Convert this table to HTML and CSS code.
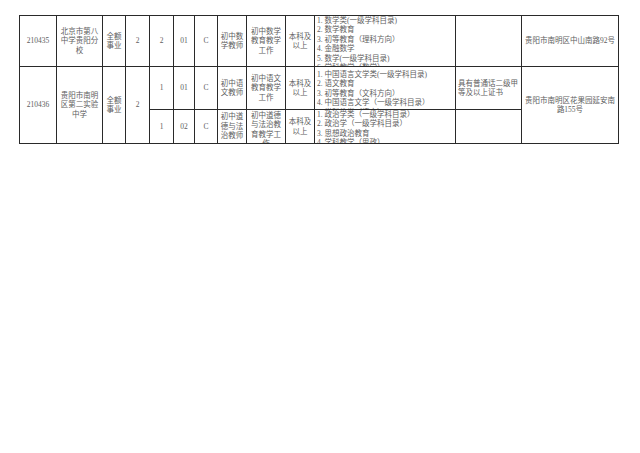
FILE: index.html
```html
<!DOCTYPE html>
<html lang="zh">
<head>
<meta charset="utf-8">
<link rel="stylesheet" href="styles.css">
</head>
<body>
<div class="sheet">
  <div class="c">210435</div>
  <div class="c">北京市第八中学贵阳分校</div>
  <div class="c">全额事业</div>
  <div class="c">2</div>
  <div class="c">2</div>
  <div class="c">01</div>
  <div class="c">C</div>
  <div class="c">初中数学教师</div>
  <div class="c">初中数学教育教学工作</div>
  <div class="c">本科及以上</div>
  <div class="m">1. 数学类(一级学科目录)<br>2. 数学教育<br>3. 初等教育（理科方向）<br>4. 金融数学<br>5. 数学(一级学科目录)<br>6. 学科教学（数学）</div>
  <div class="c"></div>
  <div class="c">贵阳市南明区中山南路92号</div>

  <div class="c span2">210436</div>
  <div class="c span2">贵阳市南明区第二实验中学</div>
  <div class="c span2">全额事业</div>
  <div class="c span2">2</div>
  <div class="c">1</div>
  <div class="c">01</div>
  <div class="c">C</div>
  <div class="c">初中语文教师</div>
  <div class="c">初中语文教育教学工作</div>
  <div class="c">本科及以上</div>
  <div class="m m2">1. 中国语言文学类(一级学科目录)<br>2. 语文教育<br>3. 初等教育（文科方向）<br>4. 中国语言文学（一级学科目录）<br>5. 学科教学（语文）</div>
  <div class="c l">具有普通话二级甲等及以上证书</div>
  <div class="c span2">贵阳市南明区花果园延安南路155号</div>

  <div class="c">1</div>
  <div class="c">02</div>
  <div class="c">C</div>
  <div class="c">初中道德与法治教师</div>
  <div class="c top">初中道德与法治教育教学工作</div>
  <div class="c">本科及以上</div>
  <div class="m">1. 政治学类（一级学科目录）<br>2. 政治学（一级学科目录）<br>3. 思想政治教育<br>4. 学科教学（思政）</div>
  <div class="c"></div>
</div>
</body>
</html>
```

FILE: styles.css
```css
html, body {
  margin: 0;
  padding: 0;
  background: #fff;
}

.sheet {
  margin: 15px 0 0 19px;
  width: 600px;
  box-sizing: border-box;
  display: grid;
  grid-template-columns: 36px 45px 22px 23px 23px 20px 22px 28px 38px 28px 140px 65px 96px;
  grid-template-rows: 50px 42px 33px;
  gap: 1px;
  padding: 1px;
  background: #2a2a2a;
  font-family: "Liberation Serif", "Noto Sans CJK SC", serif;
  font-size: 7.5px;
  line-height: 9.4px;
  color: #5e5e5e;
}

.sheet > div {
  background: #fff;
  overflow: hidden;
}

.c {
  display: flex;
  align-items: center;
  justify-content: center;
  text-align: center;
  padding: 0 2px;
}

.c.l {
  justify-content: flex-start;
  text-align: left;
}

.c.top {
  align-items: flex-start;
  padding-top: 1px;
}

.span2 {
  grid-row: span 2;
}

.m {
  padding: 0 0 0 2px;
  text-align: left;
  white-space: nowrap;
}

.m2 {
  padding-top: 3px;
}
```
